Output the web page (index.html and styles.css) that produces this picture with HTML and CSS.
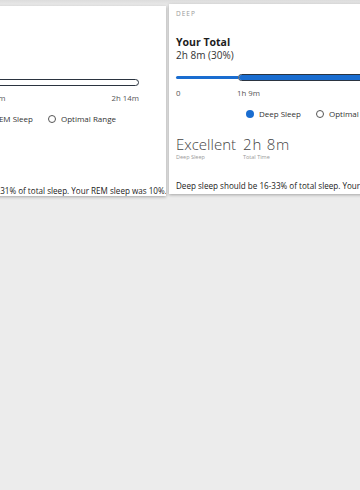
FILE: index.html
```html
<!DOCTYPE html>
<html lang="en">
<head>
	<meta charset="utf-8">
	<title>Sleep stages</title>
	<link rel="stylesheet" href="styles.css">
</head>
<body>
	<div class="carousel">
		<section class="card card-rem">
			<div class="card-kicker">REM</div>
			<div class="total-label">Your Total</div>
			<div class="total-value">0h 43m (10%)</div>
			<div class="range-bar">
				<span class="range-line" style="width: 26px"></span>
				<span class="range-optimal range-optimal-empty" style="margin-left: 44px; width: 161px"></span>
			</div>
			<div class="range-axis">
				<span class="axis-label" style="width: 70px">0</span>
				<span class="axis-label axis-grow">1h 31m</span>
				<span class="axis-label">2h 14m</span>
			</div>
			<div class="legend">
				<span class="legend-item"><span class="legend-dot"></span>REM Sleep</span>
				<span class="legend-item"><span class="legend-ring"></span>Optimal Range</span>
			</div>
			<div class="stats">
				<div class="stat">
					<div class="stat-value">Poor</div>
					<div class="stat-label">REM Sleep</div>
				</div>
				<div class="stat">
					<div class="stat-value">0h 43m</div>
					<div class="stat-label">Total Time</div>
				</div>
			</div>
			<p class="card-note">REM sleep should be 21-31% of total sleep. Your REM sleep was 10%.</p>
		</section>
		<section class="card">
			<div class="card-kicker">DEEP</div>
			<div class="total-label">Your Total</div>
			<div class="total-value">2h 8m (30%)</div>
			<div class="range-bar">
				<span class="range-line" style="width: 62px"></span>
				<span class="range-optimal" style="width: 169px"><span class="range-optimal-fill" style="width: 88%"></span></span>
			</div>
			<div class="range-axis">
				<span class="axis-label" style="width: 61px">0</span>
				<span class="axis-label axis-grow">1h 9m</span>
				<span class="axis-label">2h 21m</span>
			</div>
			<div class="legend">
				<span class="legend-item"><span class="legend-dot"></span>Deep Sleep</span>
				<span class="legend-item"><span class="legend-ring"></span>Optimal Range</span>
			</div>
			<div class="stats">
				<div class="stat">
					<div class="stat-value">Excellent</div>
					<div class="stat-label">Deep Sleep</div>
				</div>
				<div class="stat">
					<div class="stat-value stat-time">2h 8m</div>
					<div class="stat-label">Total Time</div>
				</div>
			</div>
			<p class="card-note">Deep sleep should be 16-33% of total sleep. Your deep sleep was 30%.</p>
		</section>
	</div>
</body>
</html>
```
FILE: styles.css
```css
body {
	margin: 0;
	background: #ececec;
	font-family: "Open Sans", "Noto Sans", Arial, sans-serif;
	color: #222;
	height: 490px;
	overflow: hidden;
}
.carousel {
	display: flex;
	align-items: flex-start;
	gap: 3px;
	margin-left: -99px;
	padding-top: 4px;
	background: linear-gradient(#dcdcdc, #ececec 6px);
}
.card {
	flex: 0 0 265px;
	height: 190px;
	box-sizing: border-box;
	padding: 6px 7px 0;
	background: #fff;
	box-shadow: 0 1px 3px rgba(0, 0, 0, 0.3);
	overflow: hidden;
}
.card-rem {
	margin-top: 2px;
	padding-top: 9px;
}
.card-kicker {
	font-size: 6.5px;
	line-height: 8px;
	letter-spacing: 1px;
	color: #9a9a9a;
}
.total-label {
	margin-top: 18px;
	font-size: 10.5px;
	line-height: 13px;
	font-weight: 700;
	color: #1d1d1d;
}
.total-value {
	font-size: 10px;
	line-height: 13px;
	color: #333;
}
.range-bar {
	display: flex;
	align-items: center;
	width: 231px;
	height: 7px;
	margin-top: 12px;
}
.range-line {
	height: 3px;
	background: #1a6dd0;
	border-radius: 2px 0 0 2px;
}
.range-optimal {
	box-sizing: border-box;
	height: 7px;
	border: 1px solid #2b3440;
	border-radius: 4px;
	background: #fff;
	overflow: hidden;
	display: flex;
}
.range-optimal-fill {
	background: #1a6dd0;
	border-right: 1px solid #2b3440;
}
.range-axis {
	display: flex;
	width: 231px;
	margin-top: 6.5px;
	font-size: 7.8px;
	line-height: 10px;
	color: #555;
}
.axis-grow {
	flex: 1;
}
.legend {
	display: flex;
	justify-content: flex-end;
	gap: 15px;
	margin: 11.5px 43px 0 0;
	font-size: 8px;
	line-height: 10px;
	color: #333;
}
.legend-item {
	display: flex;
	align-items: center;
	gap: 5px;
}
.legend-dot,
.legend-ring {
	width: 8px;
	height: 8px;
	box-sizing: border-box;
	border-radius: 50%;
}
.legend-dot {
	background: #1a6dd0;
}
.legend-ring {
	border: 1px solid #555;
}
.stats {
	display: flex;
	gap: 7px;
	margin-top: 16px;
}
.stat-value {
	font-size: 15px;
	line-height: 18px;
	font-weight: 300;
	color: #444;
}
.stat-time {
	letter-spacing: 0.8px;
}
.stat-label {
	margin-top: 1px;
	font-size: 5.5px;
	line-height: 7px;
	color: #999;
}
.card-note {
	margin: 19.5px 0 0;
	font-size: 8.1px;
	line-height: 10px;
	white-space: nowrap;
	color: #222;
}
```
